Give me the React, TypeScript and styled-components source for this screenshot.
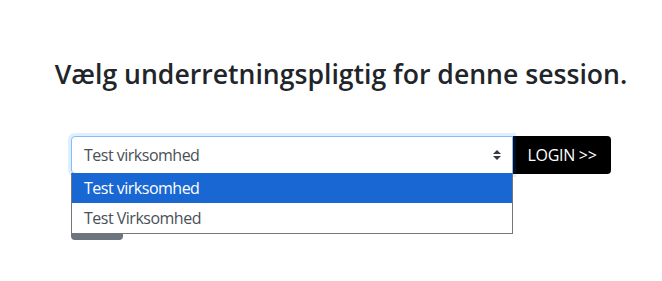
import React from 'react';
import styled, {createGlobalStyle} from 'styled-components';

const GlobalStyle = createGlobalStyle`
  body {
    margin: 0;
    background: #fff;
    font-family: "Open Sans", "Noto Sans", sans-serif;
    color: #212529;
  }
`;

const Page = styled.div`
  display: flex;
  flex-direction: column;
  align-items: center;
  padding: 59px 0 0 20px;
`;

const Title = styled.h3`
  margin: 0 0 45px;
  font-size: 26.6px;
  font-weight: 600;
  line-height: 1.2;
  color: #212529;
  white-space: nowrap;
`;

const Form = styled.div`
  width: 540px;
  display: flex;
  flex-direction: column;
  align-items: flex-start;
`;

const Row = styled.div`
  display: flex;
  width: 100%;
`;

const SelectWrap = styled.div`
  position: relative;
  flex: 1;
`;

const Select = styled.div`
  box-sizing: border-box;
  height: 38px;
  display: flex;
  align-items: center;
  padding: 0 12px;
  border: 1px solid #80bdff;
  border-radius: 4px 0 0 4px;
  box-shadow: 0 0 0 3px rgba(0, 123, 255, 0.12);
  font-size: 16px;
  letter-spacing: -0.5px;
  color: #495057;
  background: #fff;
`;

const Arrows = styled.svg`
  position: absolute;
  right: 12px;
  top: 14px;
`;

const List = styled.div`
  position: absolute;
  top: 37px;
  left: 0;
  right: 0;
  z-index: 2;
  background: #fff;
  border: 1px solid #767676;
  border-top: none;
`;

const Option = styled.div<{ $active?: boolean }>`
  height: 30px;
  display: flex;
  align-items: center;
  padding: 0 12px;
  font-size: 16px;
  letter-spacing: -0.5px;
  background: ${props => (props.$active ? '#1967d2' : '#fff')};
  color: ${props => (props.$active ? '#fff' : '#495057')};
`;

const LoginButton = styled.button`
  box-sizing: border-box;
  height: 38px;
  width: 98px;
  border: none;
  border-radius: 0 4px 4px 0;
  background: #000;
  color: #fff;
  font-family: "Open Sans", "Noto Sans", sans-serif;
  font-size: 16px;
  letter-spacing: -0.3px;
  padding: 0 10px;
  white-space: nowrap;
`;

const BackButton = styled.button`
  margin-top: 28px;
  width: 52px;
  height: 38px;
  border: none;
  border-radius: 4px;
  background: #6c757d;
`;

export default function App() {
    return (
        <>
            <GlobalStyle/>
            <Page>
                <Title>Vælg underretningspligtig for denne session.</Title>
                <Form>
                    <Row>
                        <SelectWrap>
                            <Select>Test virksomhed</Select>
                            <Arrows width="8" height="10" viewBox="0 0 8 10">
                                <path d="M4 0L0 4h8zM4 10L0 6h8z" fill="#343a40"/>
                            </Arrows>
                            <List>
                                <Option $active>Test virksomhed</Option>
                                <Option>Test Virksomhed</Option>
                            </List>
                        </SelectWrap>
                        <LoginButton>LOGIN &gt;&gt;</LoginButton>
                    </Row>
                    <BackButton/>
                </Form>
            </Page>
        </>
    );
}
